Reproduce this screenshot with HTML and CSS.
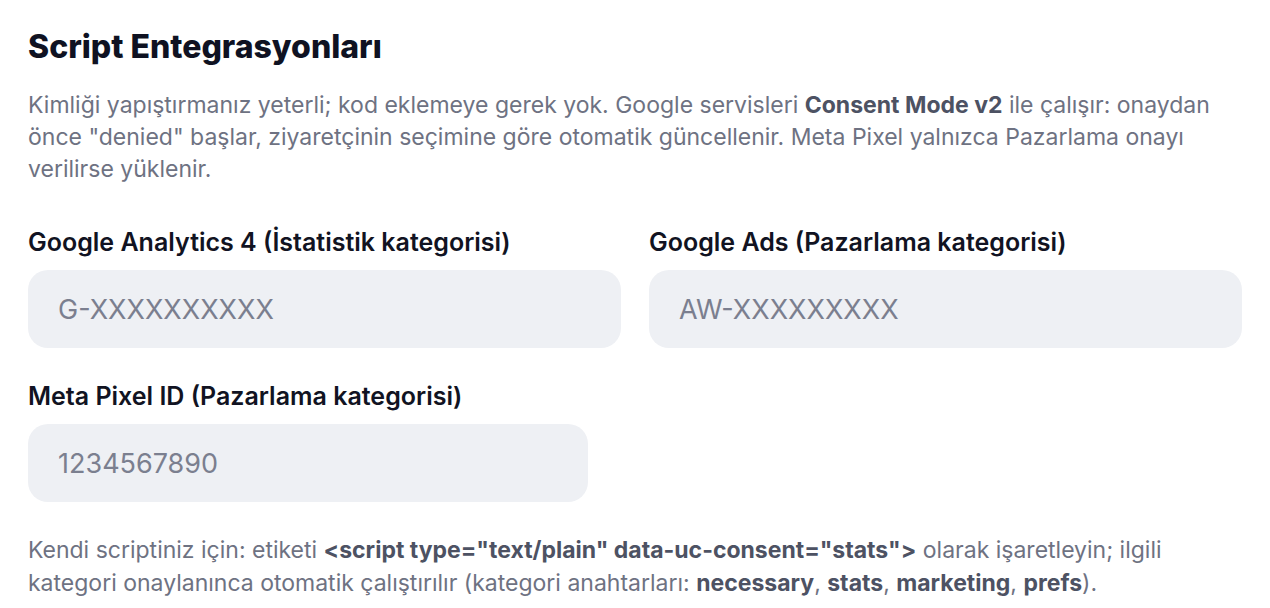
FILE: index.html
```html
<!DOCTYPE html>
<html lang="tr">
<head>
  <meta charset="UTF-8">
  <meta name="viewport" content="width=device-width, initial-scale=1.0">
  <title>Script Entegrasyonları</title>
  <link rel="stylesheet" href="styles.css">
</head>
<body>
  <section class="panel">
    <h2>Script Entegrasyonları</h2>
    <p class="lead">Kimliği yapıştırmanız yeterli; kod eklemeye gerek yok. Google servisleri <b>Consent Mode v2</b> ile çalışır: onaydan önce "denied" başlar, ziyaretçinin seçimine göre otomatik güncellenir. Meta Pixel yalnızca Pazarlama onayı verilirse yüklenir.</p>

    <div class="grid">
      <div class="field">
        <label for="ga4">Google Analytics 4 (İstatistik kategorisi)</label>
        <input type="text" id="ga4" placeholder="G-XXXXXXXXXX">
      </div>
      <div class="field">
        <label for="gads">Google Ads (Pazarlama kategorisi)</label>
        <input type="text" id="gads" placeholder="AW-XXXXXXXXX">
      </div>
    </div>

    <div class="field narrow">
      <label for="pixel">Meta Pixel ID (Pazarlama kategorisi)</label>
      <input type="text" id="pixel" placeholder="1234567890">
    </div>

    <p class="note">Kendi scriptiniz için: etiketi <b>&lt;script type="text/plain" data-uc-consent="stats"&gt;</b> olarak işaretleyin; ilgili kategori onaylanınca otomatik çalıştırılır (kategori anahtarları: <b>necessary</b>, <b>stats</b>, <b>marketing</b>, <b>prefs</b>).</p>
  </section>
</body>
</html>
```

FILE: styles.css
```css
body {
  font-family: Inter, 'Noto Sans', sans-serif;
  color: #111322;
  margin: 0;
  background: #fff;
}
.panel {
  padding: 27px 28px 0;
}
h2 {
  font-size: 32px;
  font-weight: 800;
  line-height: 40px;
  color: #0f1222;
  margin: 0 0 22px;
}
.lead {
  font-size: 23px;
  line-height: 32px;
  color: #6e7282;
  margin: 0 0 41px;
}
.lead b, .note b {
  color: #4d5263;
  font-weight: 700;
}
.grid {
  display: grid;
  grid-template-columns: 1fr 1fr;
  gap: 28px;
}
.field {
  display: flex;
  flex-direction: column;
  gap: 12px;
  margin-bottom: 32px;
}
.field label {
  font-size: 25px;
  font-weight: 600;
  line-height: 32px;
}
.field input[type="text"] {
  height: 78px;
  box-sizing: border-box;
  border: none;
  border-radius: 20px;
  background: #eef0f4;
  padding: 0 30px;
  font-family: inherit;
  font-size: 27px;
  color: #111322;
  outline: none;
}
.field input::placeholder {
  color: #7b7f8f;
}
.narrow {
  width: 560px;
}
.note {
  font-size: 23px;
  line-height: 33px;
  color: #6e7282;
  margin: 0;
}
```
